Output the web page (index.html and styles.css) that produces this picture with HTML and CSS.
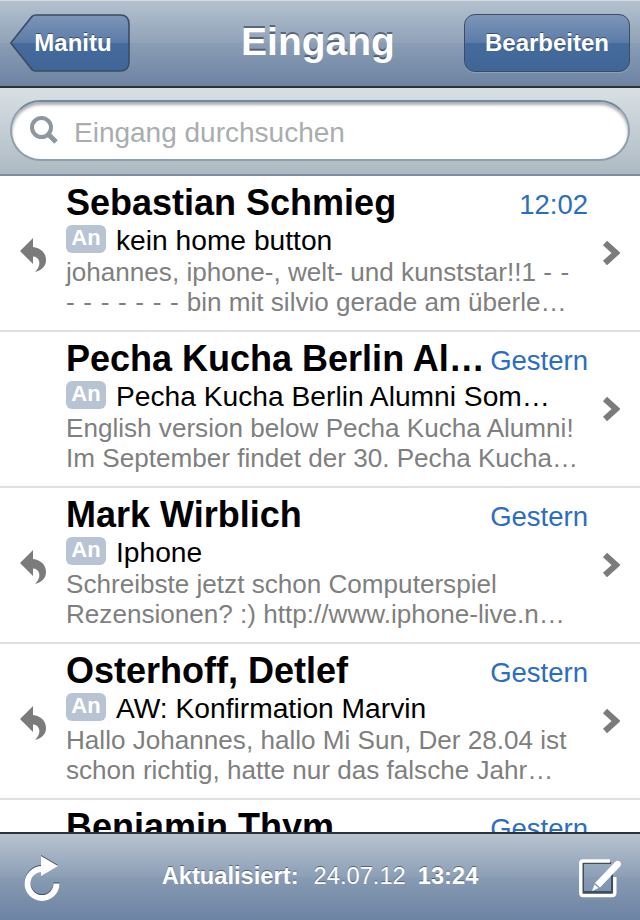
FILE: index.html
```html
<!DOCTYPE html>
<html lang="de">
<head>
<meta charset="utf-8">
<title>Eingang</title>
<link rel="stylesheet" href="styles.css">
</head>
<body>
<div class="app">
  <header class="nav">
    <a class="btn back">
      <svg class="back-shape" width="120" height="58" viewBox="0 0 120 58">
        <defs>
          <linearGradient id="bg" x1="0" y1="0" x2="0" y2="1">
            <stop offset="0" stop-color="#7d96b9"/><stop offset=".5" stop-color="#5b7ba7"/>
            <stop offset=".5" stop-color="#456b9d"/><stop offset="1" stop-color="#406697"/>
          </linearGradient>
        </defs>
        <path d="M.8 29 L22 2.4 Q23.6 1 26 1 H110 Q119 1 119 10 V48 Q119 57 110 57 H26 Q23.6 57 22 55.6 Z" fill="url(#bg)" stroke="#3a4c66" stroke-width="1.6"/>
      </svg>
      <span class="btn-label">Manitu</span>
    </a>
    <h1 class="title">Eingang</h1>
    <a class="btn edit"><span class="btn-label">Bearbeiten</span></a>
  </header>
  <div class="search">
    <div class="field">
      <svg class="glass" width="30" height="30" viewBox="0 0 30 30"><circle cx="12.5" cy="12.5" r="9.5" fill="none" stroke="#8e979d" stroke-width="4"/><path d="M19.5 19.5 L27 27" stroke="#8e979d" stroke-width="5" stroke-linecap="butt"/></svg>
      <span class="placeholder">Eingang durchsuchen</span>
    </div>
  </div>
  <main class="list">
    <article class="row">
      <div class="status"><svg class="reply" width="26" height="34" viewBox="0 0 26 34"><path d="M13 0 L13 9 C21 10 26 15 26 22 C26 28 22 32 15 34 C19 30 20 26 19 23 C18 20 16 18.500 13 18.500 L13 26 L0 13 Z" fill="#7b7b7b"/></svg></div>
      <div class="body">
        <div class="head"><span class="name">Sebastian Schmieg</span><time class="time">12:02</time></div>
        <div class="subject"><span class="badge">An</span><span class="subject-text">kein home button</span></div>
        <div class="preview">johannes, iphone-, welt- und kunststar!!1 <span class="dashes">- -</span></div>
        <div class="preview"><span class="dashes">- - - - - - -</span> bin mit silvio gerade am überle…</div>
      </div>
      <svg class="chev" width="18" height="26" viewBox="0 0 18 26"><path d="M3 3 L14 13 L3 23" fill="none" stroke="#7b7b7b" stroke-width="6"/></svg>
    </article>
    <article class="row">
      <div class="status"></div>
      <div class="body">
        <div class="head"><span class="name">Pecha Kucha Berlin Al…</span><time class="time">Gestern</time></div>
        <div class="subject"><span class="badge">An</span><span class="subject-text">Pecha Kucha Berlin Alumni Som…</span></div>
        <div class="preview">English version below Pecha Kucha Alumni!</div>
        <div class="preview">Im September findet der 30. Pecha Kucha…</div>
      </div>
      <svg class="chev" width="18" height="26" viewBox="0 0 18 26"><path d="M3 3 L14 13 L3 23" fill="none" stroke="#7b7b7b" stroke-width="6"/></svg>
    </article>
    <article class="row">
      <div class="status"><svg class="reply" width="26" height="34" viewBox="0 0 26 34"><path d="M13 0 L13 9 C21 10 26 15 26 22 C26 28 22 32 15 34 C19 30 20 26 19 23 C18 20 16 18.500 13 18.500 L13 26 L0 13 Z" fill="#7b7b7b"/></svg></div>
      <div class="body">
        <div class="head"><span class="name">Mark Wirblich</span><time class="time">Gestern</time></div>
        <div class="subject"><span class="badge">An</span><span class="subject-text">Iphone</span></div>
        <div class="preview">Schreibste jetzt schon Computerspiel</div>
        <div class="preview">Rezensionen? :) http://www.iphone-live.n…</div>
      </div>
      <svg class="chev" width="18" height="26" viewBox="0 0 18 26"><path d="M3 3 L14 13 L3 23" fill="none" stroke="#7b7b7b" stroke-width="6"/></svg>
    </article>
    <article class="row">
      <div class="status"><svg class="reply" width="26" height="34" viewBox="0 0 26 34"><path d="M13 0 L13 9 C21 10 26 15 26 22 C26 28 22 32 15 34 C19 30 20 26 19 23 C18 20 16 18.500 13 18.500 L13 26 L0 13 Z" fill="#7b7b7b"/></svg></div>
      <div class="body">
        <div class="head"><span class="name">Osterhoff, Detlef</span><time class="time">Gestern</time></div>
        <div class="subject"><span class="badge">An</span><span class="subject-text">AW: Konfirmation Marvin</span></div>
        <div class="preview">Hallo Johannes, hallo Mi Sun, Der 28.04 ist</div>
        <div class="preview">schon richtig, hatte nur das falsche Jahr…</div>
      </div>
      <svg class="chev" width="18" height="26" viewBox="0 0 18 26"><path d="M3 3 L14 13 L3 23" fill="none" stroke="#7b7b7b" stroke-width="6"/></svg>
    </article>
    <article class="row">
      <div class="status"></div>
      <div class="body">
        <div class="head"><span class="name">Benjamin Thym</span><time class="time">Gestern</time></div>
      </div>
    </article>
  </main>
  <footer class="toolbar">
    <svg class="tool refresh" width="38" height="46" viewBox="0 0 38 46">
      <path d="M19 14 A14.500 14.500 0 1 0 33.500 28.500" fill="none" stroke="#fff" stroke-width="6"/>
      <path d="M18 1 L35 11 L18 21 Z" fill="#fff"/>
    </svg>
    <div class="updated"><b>Aktualisiert:</b><span>24.07.12</span><b>13:24</b></div>
    <svg class="tool compose" width="44" height="40" viewBox="0 0 44 40">
      <path d="M33 15 V36 H4 V5 H32" fill="none" stroke="#3d4d63" stroke-width="2"/>
      <path d="M31 3 H4 Q1.800 3 1.800 5 V35 Q1.800 37.500 4 37.500 H33 Q35.800 37.500 35.800 35 V19" fill="none" stroke="#fff" stroke-width="3.400"/>
      <path d="M5 35 H33 V33 H5 Z" fill="#3d4d63"/>
      <path d="M16 25 L36 4 Q38.500 1.800 41 3.800 Q43 6 41 8.500 L21 29.500 Z" fill="#fff"/>
      <path d="M13 33 L15.500 26.500 L19.500 30 Z" fill="#fff"/>
    </svg>
  </footer>
</div>
</body>
</html>
```
FILE: styles.css
```css
* { box-sizing: border-box; }
html, body { margin: 0; padding: 0; }
body { font-family: "Liberation Sans", Arial, sans-serif; background: #fff; }
.app { width: 640px; height: 920px; display: flex; flex-direction: column; overflow: hidden; }

.nav {
  height: 88px; flex: none; display: grid; grid-template-columns: 1fr auto 1fr; align-items: start;
  padding: 13px 10px 0;
  border-top: 1px solid #d5dbe1;
  border-bottom: 2px solid #2d3239;
  background: linear-gradient(#b4c1cf, #90a2b8 50%, #8a9db4 50%, #6c83a3);
}
.title {
  margin: 5px 4px 0 0; font-size: 39px; line-height: 46px; font-weight: 700; color: #fff;
  text-shadow: 0 -2px 0 rgba(50,62,82,.65);
}
.btn { position: relative; display: flex; align-items: center; justify-content: center; height: 58px; color: #fff; }
.btn-label { position: relative; font-size: 24px; font-weight: 700; text-shadow: 0 -1px 0 rgba(40,55,80,.7); }
.back { width: 120px; padding-left: 6px; }
.back-shape { position: absolute; left: 0; top: 0; }
.edit {
  width: 166px; justify-self: end; border: 1.500px solid #3a4c66; border-radius: 11px;
  background: linear-gradient(#7d96b9, #5b7ba7 50%, #456b9d 50%, #406697);
  box-shadow: 0 1px 0 rgba(255,255,255,.18);
}

.search {
  height: 88px; flex: none; padding: 12px 10px 0;
  border-bottom: 2px solid #7e8e9c;
  background: linear-gradient(#d8e0e4, #aebac3);
}
.field {
  height: 61px; display: flex; align-items: center; gap: 15px; padding: 0 0 0 17px;
  background: #fff; border-radius: 31px; border: 2px solid #8d9eac; border-top-color: #76899a;
  box-shadow: inset 0 3px 3px rgba(70,80,90,.45);
}
.glass { flex: none; margin-top: -2px; }
.placeholder { font-size: 28px; line-height: 32px; margin-top: 4px; color: #a9adaf; }

.list { flex: 1; min-height: 0; overflow: hidden; background: #fff; }
.row {
  height: 156px; display: flex; align-items: flex-start;
  border-bottom: 2px solid #e0e0e0;
}
.status { width: 66px; flex: none; padding: 62px 0 0 20px; }
.reply, .chev { display: block; }
.body { width: 522px; flex: none; padding-top: 6px; }
.head { display: flex; align-items: flex-start; justify-content: space-between; height: 39px; }
.name { font-size: 36px; line-height: 41px; font-weight: 700; color: #000; white-space: nowrap; }
.time { font-size: 27.500px; line-height: 39px; margin-top: 3px; color: #2b6dc3; }
.subject { display: flex; align-items: center; height: 32px; margin: 3px 0 1px; }
.badge {
  width: 40px; height: 28px; margin-right: 10px; border-radius: 6px; margin-top: -2px;
  background: #b8c4d3; color: #fff; font-size: 22px; font-weight: 700; line-height: 26px; text-align: center;
}
.subject-text { font-size: 28.200px; color: #000; white-space: nowrap; }
.preview { font-size: 26.100px; line-height: 30px; color: #7f7f7f; white-space: nowrap; }
.dashes { letter-spacing: .7px; }
.chev { flex: none; margin: 64px 0 0 14px; }

.toolbar {
  height: 88px; flex: none; display: flex; align-items: center; justify-content: space-between;
  padding: 0 17px 0 23px;
  border-top: 2px solid #2d3239;
  background: linear-gradient(#b8c3cf, #8c9fb6 50%, #889bb3 50%, #6c83a3);
}
.updated { display: flex; gap: 15px; font-size: 23.700px; color: #fff; text-shadow: 0 -1px 0 rgba(40,55,80,.6); margin-top: -1px; }
.updated b { font-weight: 700; }
.updated span { margin-right: -3px; }
.tool { flex: none; }
.refresh { filter: drop-shadow(0 -1px 0 rgba(40,55,80,.8)); margin-top: 2px; }
.compose { margin-top: 1px; }
```
